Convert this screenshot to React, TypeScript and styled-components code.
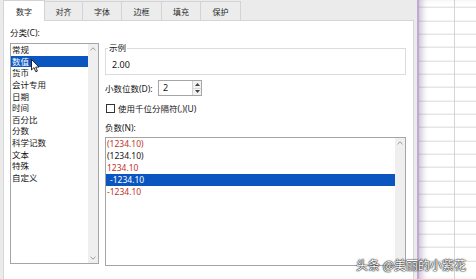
import React from 'react';
import styled, { createGlobalStyle } from 'styled-components';

const GlobalStyle = createGlobalStyle`
  html, body, #root {
    margin: 0;
    padding: 0;
    height: 100%;
  }
  body {
    font-family: "Noto Sans", "Noto Sans CJK SC", sans-serif;
    color: #151515;
    overflow: hidden;
    background: #fff;
  }
`;

const Screen = styled.div`
  position: relative;
  display: flex;
  width: 476px;
  height: 279px;
  overflow: hidden;
`;

const Dialog = styled.div`
  width: 417px;
  box-sizing: border-box;
  padding-left: 3px;
  display: flex;
  flex-direction: column;
  background: #ebebeb;
`;

const TabBar = styled.div`
  display: flex;
  align-items: flex-end;
  height: 20px;
  position: relative;
  z-index: 1;
`;

const Tab = styled.div<{ $active?: boolean; $w: number }>`
  width: ${(p) => p.$w}px;
  height: ${(p) => (p.$active ? 21 : 19)}px;
  margin-bottom: ${(p) => (p.$active ? -1 : 0)}px;
  margin-right: -1px;
  box-sizing: border-box;
  border: 1px solid #d3d3d3;
  border-bottom: none;
  background: ${(p) => (p.$active ? '#fff' : '#ececec')};
  display: flex;
  align-items: center;
  justify-content: center;
  font-size: 8px;
  color: #2a2a2a;
`;

const Panel = styled.div`
  flex: 1;
  width: 411px;
  box-sizing: border-box;
  background: #fff;
  border: 1px solid #d6d6d6;
  border-bottom: none;
  display: flex;
  gap: 6px;
  padding: 6px 0 0 6px;
`;

const LeftCol = styled.div`
  width: 89px;
  display: flex;
  flex-direction: column;
`;

const Label = styled.div<{ $mt?: number }>`
  height: 12px;
  line-height: 12px;
  font-size: 8.5px;
  margin-top: ${(p) => p.$mt ?? 0}px;
  white-space: nowrap;
`;

const ListBox = styled.div<{ $h: number; $mt: number }>`
  height: ${(p) => p.$h}px;
  margin-top: ${(p) => p.$mt}px;
  box-sizing: border-box;
  border: 1px solid #a5a5a5;
  display: flex;
`;

const ListArea = styled.div`
  flex: 1;
  display: flex;
  flex-direction: column;
`;

const Item = styled.div<{ $selected?: boolean; $color?: string; $lh: number }>`
  height: ${(p) => p.$lh}px;
  line-height: ${(p) => p.$lh}px;
  font-size: 8.5px;
  padding-left: ${(p) => (p.$selected && p.$color ? 4 : 1)}px;
  white-space: nowrap;
  background: ${(p) => (p.$selected ? '#0a55c0' : 'transparent')};
  color: ${(p) => (p.$selected ? '#fff' : p.$color ?? '#151515')};
`;

const ScrollTrack = styled.div`
  width: 10px;
  background: #efefef;
  display: flex;
  flex-direction: column;
  justify-content: space-between;
  align-items: center;
  padding: 3px 0;
`;

const RightCol = styled.div`
  width: 301px;
  display: flex;
  flex-direction: column;
  padding-top: 21px;
`;

const SampleBox = styled.div`
  position: relative;
  height: 27px;
  box-sizing: border-box;
  border: 1px solid #dcdcdc;
  padding: 10px 0 0 6px;
  font-size: 9px;
  line-height: 12px;
`;

const Legend = styled.span`
  position: absolute;
  top: -7px;
  left: 2px;
  padding: 0 1px;
  background: #fff;
  font-size: 8.5px;
  line-height: 12px;
`;

const SpinRow = styled.div`
  display: flex;
  align-items: center;
  height: 16px;
  margin-top: 5px;
`;

const SpinLabel = styled.div`
  width: 53px;
  font-size: 8.5px;
  white-space: nowrap;
`;

const SpinBox = styled.div`
  width: 44px;
  height: 16px;
  box-sizing: border-box;
  border: 1px solid #a5a5a5;
  display: flex;
  justify-content: space-between;
`;

const SpinValue = styled.div`
  padding-left: 4px;
  font-size: 9px;
  line-height: 14px;
`;

const SpinButtons = styled.div`
  width: 8px;
  display: flex;
  flex-direction: column;
  border-left: 1px solid #d0d0d0;
`;

const SpinButton = styled.div`
  flex: 1;
  background: #f2f2f2;
  display: flex;
  align-items: center;
  justify-content: center;
  & + & {
    border-top: 1px solid #d8d8d8;
  }
`;

const CheckRow = styled.div`
  display: flex;
  align-items: center;
  gap: 3px;
  height: 12px;
  margin-top: 6px;
  font-size: 8.5px;
  white-space: nowrap;
`;

const CheckBox = styled.div`
  width: 9px;
  height: 9px;
  box-sizing: border-box;
  border: 1px solid #333;
  margin-left: 1px;
  background: #fff;
`;

const Gutter = styled.div`
  flex: 1;
`;

const Sheet = styled.div`
  flex: 1;
  border-left: 2px solid #bfa9d2;
  box-shadow: inset 6px 0 6px -3px rgba(110, 80, 140, 0.35);
  background-color: #fff;
  background-image:
    linear-gradient(to right, transparent 35px, #d6d6d6 35px, #d6d6d6 36px, transparent 36px),
    repeating-linear-gradient(to bottom, transparent 0, transparent 12.33px, #d9d9d9 12.33px, #d9d9d9 13.33px);
  background-position: 0 0, 0 -5.33px;
`;

const Watermark = styled.div`
  position: absolute;
  left: 356px;
  top: 257px;
  font-family: "Noto Sans CJK SC", sans-serif;
  font-size: 12px;
  line-height: 16px;
  color: #fff;
  white-space: nowrap;
  text-shadow: 0 0 1px #111, 0 0 1px #111, 0 0 2px #333;
`;

const Cursor = styled.svg`
  position: absolute;
  left: 31px;
  top: 59px;
`;

const Chevron = ({ down }: { down?: boolean }) => (
  <svg width="6" height="4" viewBox="0 0 6 4">
    <path
      d={down ? 'M0.5 0.8 L3 3.2 L5.5 0.8' : 'M0.5 3.2 L3 0.8 L5.5 3.2'}
      fill="none"
      stroke="#9a9a9a"
      strokeWidth="1"
    />
  </svg>
);

const Triangle = ({ down }: { down?: boolean }) => (
  <svg width="5" height="3" viewBox="0 0 5 3">
    <path d={down ? 'M0 0 L5 0 L2.5 3 Z' : 'M0 3 L5 3 L2.5 0 Z'} fill="#444" />
  </svg>
);

const tabs = [
  { name: '数字', w: 42 },
  { name: '对齐', w: 39 },
  { name: '字体', w: 40 },
  { name: '边框', w: 41 },
  { name: '填充', w: 40 },
  { name: '保护', w: 41 },
];

const categories = ['常规', '数值', '货币', '会计专用', '日期', '时间', '百分比', '分数', '科学记数', '文本', '特殊', '自定义'];

const RED = '#c0322a';
const negatives = [
  { text: '(1234.10)', color: RED },
  { text: '(1234.10)', color: '#151515' },
  { text: '1234.10', color: RED },
  { text: '-1234.10', color: '#151515', selected: true },
  { text: '-1234.10', color: RED },
];

export default function App() {
  return (
    <>
      <GlobalStyle />
      <Screen>
        <Dialog>
          <TabBar>
            {tabs.map((t, i) => (
              <Tab key={t.name} $w={t.w} $active={i === 0}>
                {t.name}
              </Tab>
            ))}
          </TabBar>
          <Panel>
            <LeftCol>
              <Label>分类(C):</Label>
              <ListBox $h={221} $mt={4}>
                <ListArea>
                  {categories.map((c, i) => (
                    <Item key={c} $lh={11.65} $selected={i === 1}>
                      {c}
                    </Item>
                  ))}
                </ListArea>
                <ScrollTrack>
                  <Chevron />
                  <Chevron down />
                </ScrollTrack>
              </ListBox>
            </LeftCol>
            <RightCol>
              <SampleBox>
                <Legend>示例</Legend>
                2.00
              </SampleBox>
              <SpinRow>
                <SpinLabel>小数位数(D):</SpinLabel>
                <SpinBox>
                  <SpinValue>2</SpinValue>
                  <SpinButtons>
                    <SpinButton>
                      <Triangle />
                    </SpinButton>
                    <SpinButton>
                      <Triangle down />
                    </SpinButton>
                  </SpinButtons>
                </SpinBox>
              </SpinRow>
              <CheckRow>
                <CheckBox />
                使用千位分隔符(,)(U)
              </CheckRow>
              <Label $mt={8}>负数(N):</Label>
              <ListBox $h={129} $mt={3}>
                <ListArea>
                  {negatives.map((n, i) => (
                    <Item key={i} $lh={11.9} $color={n.color} $selected={n.selected}>
                      {n.text}
                    </Item>
                  ))}
                </ListArea>
                <ScrollTrack>
                  <Chevron />
                  <Gutter />
                </ScrollTrack>
              </ListBox>
            </RightCol>
          </Panel>
        </Dialog>
        <Sheet />
        <Cursor width="9" height="14" viewBox="0 0 9 14">
          <path d="M0.5 0.5 L0.5 11 L3 8.6 L4.8 12.8 L6.4 12.1 L4.7 8.1 L8 8.1 Z" fill="#fff" stroke="#111" strokeWidth="0.9" strokeLinejoin="round" />
        </Cursor>
        <Watermark>头条 @美丽的小紫花</Watermark>
      </Screen>
    </>
  );
}
